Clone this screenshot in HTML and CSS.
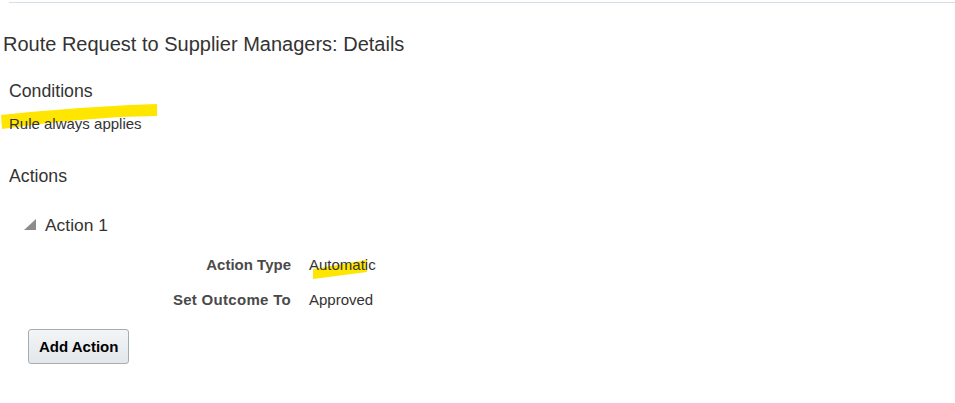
FILE: index.html
```html
<!DOCTYPE html>
<html>
<head>
<meta charset="utf-8">
<link rel="stylesheet" href="styles.css">
</head>
<body>
<div class="topline"></div>
<main class="page">
  <h1 class="title">Route Request to Supplier Managers: Details</h1>
  <section class="conditions">
    <h2 class="section-head">Conditions</h2>
    <div class="rule-text">Rule always applies</div>
    <svg class="hl hl-cond" width="160" height="32" viewBox="0 0 160 32"><polygon points="1,15 30,12 80,8 130,5 157,4 157,16 120,17 80,20 40,24 2,29" fill="#ffe600"/></svg>
  </section>
  <section class="actions">
    <h2 class="section-head">Actions</h2>
    <div class="action">
      <div class="action-head">
        <svg class="disclose" width="14" height="14" viewBox="0 0 14 14"><polygon points="1,12 13,1 13,12" fill="#8c8c8c"/></svg>
        <span class="action-title">Action 1</span>
      </div>
      <div class="fields">
        <div class="label">Action Type</div>
        <div class="value"><span class="hl-wrap"><svg class="hl hl-auto" width="54" height="19" viewBox="0 0 54 19"><polygon points="0,9 54,0 54,12 0,19" fill="#ffe600"/></svg><span class="hl-text">Automatic</span></span></div>
        <div class="label label-wide">Set Outcome To</div>
        <div class="value">Approved</div>
      </div>
    </div>
    <button class="btn">Add Action</button>
  </section>
</main>
</body>
</html>
```

FILE: styles.css
```css
html, body {
  margin: 0;
  padding: 0;
  background: #ffffff;
}
body {
  font-family: "Liberation Sans", Arial, sans-serif;
  color: #333333;
  width: 955px;
  height: 403px;
  overflow: hidden;
}
.topline {
  margin: 2px 0 0 9px;
  height: 1px;
  background: #d6dfe6;
}
.page {
  padding-left: 9px;
}
.title {
  margin: 30px 0 0 -6px;
  font-size: 20px;
  line-height: 22px;
  font-weight: normal;
  color: #333333;
}
.conditions {
  position: relative;
  margin-top: 26px;
}
.section-head {
  margin: 0;
  font-size: 17.7px;
  line-height: 20px;
  font-weight: normal;
  color: #333333;
}
.rule-text {
  position: relative;
  z-index: 1;
  margin-top: 14px;
  font-size: 15px;
  line-height: 18px;
  color: #333333;
}
.hl {
  position: absolute;
  pointer-events: none;
}
.hl-cond {
  left: -9px;
  top: 19px;
  z-index: 0;
}
.actions {
  margin-top: 33px;
}
.action {
  margin-top: 29px;
  padding-left: 14px;
}
.action-head {
  display: flex;
  align-items: center;
  gap: 8px;
  height: 20px;
}
.disclose {
  display: block;
  margin-top: -1px;
}
.action-title {
  font-size: 17.4px;
  line-height: 20px;
}
.fields {
  display: grid;
  grid-template-columns: 191px auto;
  column-gap: 18px;
  row-gap: 17px;
  margin-top: 21px;
  margin-left: 77px;
  font-size: 15px;
  line-height: 18px;
}
.label {
  text-align: right;
  font-weight: bold;
  color: #4a4a4a;
}
.label-wide {
  letter-spacing: 0.3px;
}
.value {
  color: #333333;
}
.hl-wrap {
  position: relative;
  display: inline-block;
}
.hl-auto {
  left: 4px;
  top: 4px;
}
.hl-text {
  position: relative;
}
.btn {
  display: block;
  margin-top: 20px;
  margin-left: 19px;
  height: 35px;
  padding: 0 10px;
  font-family: "Liberation Sans", Arial, sans-serif;
  font-size: 15px;
  font-weight: bold;
  color: #000000;
  background: linear-gradient(#f3f5f6, #e3e7ea);
  border: 1px solid #a4adb3;
  border-radius: 3px;
}
```
